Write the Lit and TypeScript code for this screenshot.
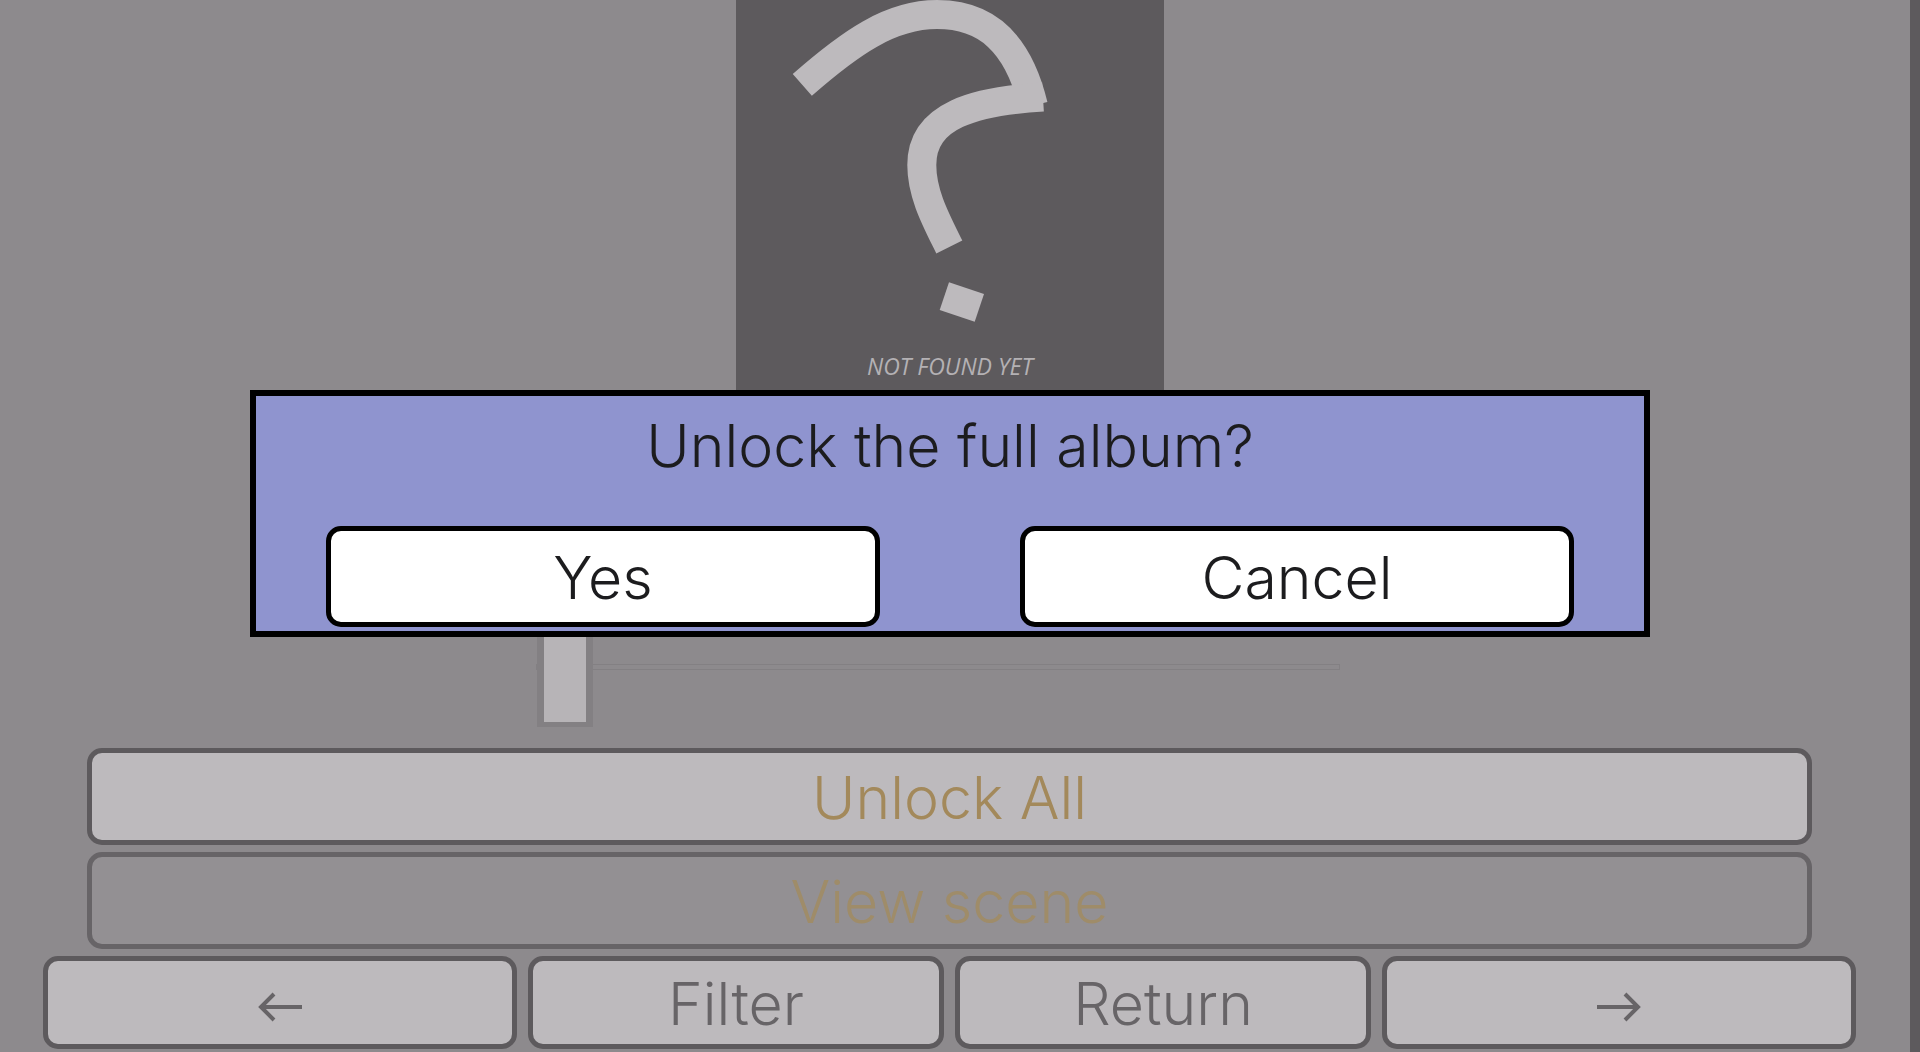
import { LitElement, html, css } from "lit";
import { customElement, state } from "lit/decorators.js";

@customElement("app-root")
export class AppRoot extends LitElement {
  static styles = css`
    :host {
      display: block;
      font-family: Inter, "Open Sans", sans-serif;
      font-weight: 350;
    }
    .screen {
      position: relative;
      display: grid;
      grid-template-columns: minmax(0, 1fr) 10px;
      height: 100vh;
      overflow: hidden;
      background: #8d8a8d;
    }
    .scrollbar {
      background: #5d5a5d;
    }
    .album {
      display: flex;
      flex-direction: column;
      align-items: center;
      padding-right: 10px;
    }
    .card {
      flex: none;
      width: 428px;
      height: 590px;
      background: #5d5a5d;
    }
    .card svg {
      display: block;
    }
    .caption {
      font: italic 400 23px "Open Sans", "Noto Sans", sans-serif;
      fill: #b4b1b4;
    }
    .pager {
      flex: none;
      appearance: none;
      width: calc(42% + 6px);
      height: 120px;
      margin: 17px 24px 21px 0;
      background: transparent;
    }
    .pager::-webkit-slider-runnable-track {
      height: 6px;
      box-sizing: border-box;
      border: 1px solid #838083;
    }
    .pager::-webkit-slider-thumb {
      appearance: none;
      box-sizing: border-box;
      width: 56px;
      height: 120px;
      margin-top: -58px;
      border: solid #838083;
      border-width: 5px 7px;
      background: #b7b4b7;
    }
    .btn {
      box-sizing: border-box;
      display: flex;
      align-items: center;
      justify-content: center;
      margin: 0;
      padding: 2px 0 0;
      border: 5px solid #5d5a5d;
      border-radius: 15px;
      background: #bdbabd;
      color: #676467;
      font: inherit;
      font-size: 59px;
      line-height: 72px;
    }
    .actions {
      flex: none;
      display: grid;
      gap: 7px;
      box-sizing: border-box;
      width: 100%;
      padding: 0 88px 7px 87px;
    }
    .actions .btn {
      height: 97px;
      color: #a3895b;
    }
    .actions .btn:disabled {
      border-color: #676467;
      background: #939093;
      color: #9f8c69;
    }
    .nav {
      flex: none;
      display: grid;
      grid-template-columns: 474fr 416fr 416fr 474fr;
      gap: 11px;
      box-sizing: border-box;
      width: 100%;
      padding: 0 44px 0 43px;
    }
    .nav .btn {
      height: 93px;
    }
    .arrow {
      fill: none;
      stroke: currentColor;
      stroke-width: 4;
    }
    .dialog {
      position: absolute;
      top: 390px;
      left: 250px;
      right: 270px;
      width: auto;
      box-sizing: border-box;
      margin: 0;
      padding: 14px 0 4px;
      border: 6px solid #000;
      background: #8f94cf;
      color: #1c1c1e;
    }
    .title {
      margin: 0 0 44px;
      text-align: center;
      font-size: 59px;
      font-weight: inherit;
      line-height: 72px;
    }
    .choices {
      display: grid;
      grid-template-columns: 1fr 1fr;
      justify-items: center;
    }
    .choices .btn {
      width: calc(80% - 2px);
      height: 101px;
      border-color: #000;
      background: #fff;
      color: #1c1c1e;
    }
  `;

  @state() private open = true;

  private close() {
    this.open = false;
  }

  render() {
    return html`
      <div class="screen">
        <main class="album">
          <div class="card">
            <svg width="428" height="590" viewBox="736 0 428 590" role="img" aria-label="Not found yet">
              <g fill="none" stroke="#bdbabd" stroke-width="29">
                <path d="M802.3 84.8C850 43 890 14.6 937 14.6C986 14.6 1018 42 1033.3 105.4" />
                <path d="M1043 97C975 101 921.8 115 921.8 165C921.8 194 936 220 949.3 247" />
              </g>
              <path fill="#bdbabd" d="M949 282.3L984 294L974.7 321.7L939.7 310Z" />
              <text class="caption" x="950" y="375" text-anchor="middle">NOT FOUND YET</text>
            </svg>
          </div>
          <input class="pager" type="range" min="0" max="20" value="0" aria-label="Album page" />
          <div class="actions">
            <button class="btn" @click=${() => (this.open = true)}>Unlock All</button>
            <button class="btn" disabled>View scene</button>
          </div>
          <nav class="nav">
            <button class="btn" aria-label="Previous">
              <svg class="arrow" width="44" height="38" viewBox="0 -7 44 38">
                <path d="M44 15H3M16 2L3 15L16 28" />
              </svg>
            </button>
            <button class="btn">Filter</button>
            <button class="btn">Return</button>
            <button class="btn" aria-label="Next">
              <svg class="arrow" width="44" height="38" viewBox="0 -7 44 38">
                <path d="M0 15H41M28 2L41 15L28 28" />
              </svg>
            </button>
          </nav>
        </main>
        <div class="scrollbar"></div>
        ${this.open
          ? html`<dialog class="dialog" open aria-labelledby="question">
              <h2 class="title" id="question">Unlock the full album?</h2>
              <div class="choices">
                <button class="btn" @click=${this.close}>Yes</button>
                <button class="btn" @click=${this.close}>Cancel</button>
              </div>
            </dialog>`
          : null}
      </div>
    `;
  }
}
